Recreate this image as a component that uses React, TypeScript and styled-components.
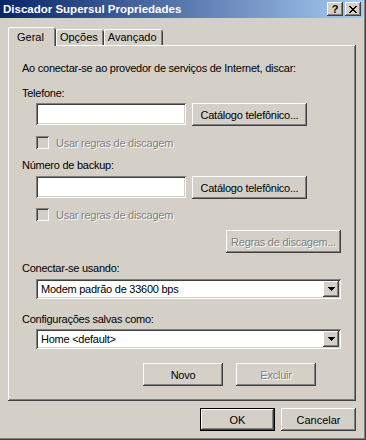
import React from 'react';
import styled, { createGlobalStyle, css } from 'styled-components';

const GlobalStyle = createGlobalStyle`
  html, body {
    margin: 0;
    padding: 0;
    background: #d4d0c8;
  }
  body {
    font-family: 'Liberation Sans', Arial, sans-serif;
    font-size: 11px;
    color: #000;
  }
`;

const raised = css`
  box-shadow: inset -1px -1px #404040, inset 1px 1px #ffffff,
    inset -2px -2px #808080, inset 2px 2px #d4d0c8;
`;

const sunken = css`
  box-shadow: inset 1px 1px #808080, inset -1px -1px #ffffff,
    inset 2px 2px #404040, inset -2px -2px #d4d0c8;
`;

const disabledText = css`
  color: #808080;
  text-shadow: 1px 1px 0 #ffffff;
`;

const Window = styled.div`
  width: 366px;
  height: 440px;
  box-sizing: border-box;
  background: #d4d0c8;
  display: flex;
  flex-direction: column;
  padding: 0 3px 3px 0;
  box-shadow: inset -1px -1px #404040, inset -2px -2px #808080;
`;

const TitleBar = styled.div`
  height: 18px;
  display: flex;
  align-items: center;
  padding: 0 2px 0 3px;
  background: linear-gradient(to right, #0a246a, #a6caf0);
`;

const Title = styled.span`
  flex: 1;
  color: #fff;
  font-weight: bold;
  font-size: 11.5px;
  white-space: nowrap;
`;

const TitleButton = styled.div<{ $gap?: number }>`
  width: 16px;
  height: 14px;
  box-sizing: border-box;
  margin-left: ${(p) => p.$gap ?? 0}px;
  background: #d4d0c8;
  ${raised};
  display: flex;
  align-items: center;
  justify-content: center;
  font-weight: bold;
  font-size: 11px;
  line-height: 1;
`;

const Body = styled.div`
  flex: 1;
  display: flex;
  flex-direction: column;
  padding: 9px 7px 0 8px;
`;

const TabStrip = styled.div`
  display: flex;
  align-items: flex-end;
  height: 18px;
  position: relative;
  z-index: 1;
`;

const Tab = styled.div<{ $active?: boolean }>`
  box-sizing: border-box;
  height: ${(p) => (p.$active ? 19 : 16)}px;
  margin-bottom: ${(p) => (p.$active ? -1 : 0)}px;
  padding: ${(p) => (p.$active ? '0 12px 0 9px' : '0 6px 0 4px')};
  display: flex;
  align-items: center;
  background: #d4d0c8;
  border-radius: 2px 2px 0 0;
  box-shadow: inset 1px 0 #ffffff, inset 0 1px #ffffff, inset -1px 0 #404040,
    inset -2px 0 #808080;
  white-space: nowrap;
`;

const Panel = styled.div`
  box-sizing: border-box;
  width: 348px;
  height: 356px;
  display: flex;
  flex-direction: column;
  padding: 0 15px 0 14px;
  letter-spacing: -0.25px;
  box-shadow: inset -1px -1px #404040, inset 1px 1px #ffffff,
    inset -2px -2px #808080;
`;

const Label = styled.div<{ $top: number; $disabled?: boolean }>`
  margin-top: ${(p) => p.$top}px;
  line-height: 13px;
  height: 13px;
  white-space: nowrap;
  ${(p) => p.$disabled && disabledText};
`;

const FieldRow = styled.div<{ $top: number }>`
  display: flex;
  gap: 6px;
  margin: ${(p) => p.$top}px 0 0 14px;
  align-items: flex-start;
`;

const TextBox = styled.div`
  width: 150px;
  height: 22px;
  box-sizing: border-box;
  background: #fff;
  ${sunken};
`;

const Button = styled.div<{
  $w: number;
  $disabled?: boolean;
  $default?: boolean;
}>`
  width: ${(p) => p.$w}px;
  height: 23px;
  box-sizing: border-box;
  background: #d4d0c8;
  display: flex;
  align-items: center;
  justify-content: center;
  white-space: nowrap;
  ${(p) =>
    p.$default
      ? css`
          box-shadow: inset 0 0 0 1px #000, inset -2px -2px #404040,
            inset 2px 2px #ffffff, inset -3px -3px #808080,
            inset 3px 3px #d4d0c8;
        `
      : raised};
  ${(p) => p.$disabled && disabledText};
`;

const CheckRow = styled.div<{ $top: number }>`
  display: flex;
  align-items: center;
  gap: 7px;
  height: 13px;
  margin: ${(p) => p.$top}px 0 0 14px;
  ${disabledText};
`;

const CheckBox = styled.span`
  width: 13px;
  height: 13px;
  box-sizing: border-box;
  background: #d4d0c8;
  ${sunken};
`;

const RightButton = styled.div<{ $top: number }>`
  display: flex;
  justify-content: flex-end;
  margin-top: ${(p) => p.$top}px;
`;

const Select = styled.div<{ $top: number }>`
  width: 305px;
  height: 20px;
  box-sizing: border-box;
  margin: ${(p) => p.$top}px 0 0 14px;
  background: #fff;
  ${sunken};
  display: flex;
  align-items: center;
  justify-content: space-between;
  padding: 0 2px 0 5px;
`;

const DropButton = styled.div`
  width: 16px;
  height: 16px;
  box-sizing: border-box;
  background: #d4d0c8;
  ${raised};
  display: flex;
  align-items: center;
  justify-content: center;
`;

const ButtonRow = styled.div<{ $top: number; $left: number }>`
  display: flex;
  gap: 13px;
  margin: ${(p) => p.$top}px 0 0 ${(p) => p.$left}px;
`;

const Footer = styled.div`
  display: flex;
  justify-content: flex-end;
  gap: 6px;
  width: 348px;
  margin-top: 7px;
`;

const CloseGlyph = () => (
  <svg width='8' height='7' viewBox='0 0 8 7' shapeRendering='crispEdges'>
    <path
      d='M0 0h2v1H0zM6 0h2v1H6zM1 1h2v1H1zM5 1h2v1H5zM2 2h4v1H2zM3 3h2v1H3zM2 4h4v1H2zM1 5h2v1H1zM5 5h2v1H5zM0 6h2v1H0zM6 6h2v1H6z'
      fill='#000'
    />
  </svg>
);

const Arrow = () => (
  <svg width='7' height='4' viewBox='0 0 7 4' shapeRendering='crispEdges'>
    <path d='M0 0h7v1H0zM1 1h5v1H1zM2 2h3v1H2zM3 3h1v1H3z' fill='#000' />
  </svg>
);

const ComboBox = ({ top, value }: { top: number; value: string }) => (
  <Select $top={top}>
    <span>{value}</span>
    <DropButton>
      <Arrow />
    </DropButton>
  </Select>
);

export default function App() {
  return (
    <>
      <GlobalStyle />
      <Window>
        <TitleBar>
          <Title>Discador Supersul Propriedades</Title>
          <TitleButton>?</TitleButton>
          <TitleButton $gap={2}>
            <CloseGlyph />
          </TitleButton>
        </TitleBar>

        <Body>
          <TabStrip>
            <Tab $active>Geral</Tab>
            <Tab>Opções</Tab>
            <Tab>Avançado</Tab>
          </TabStrip>

          <Panel>
            <Label $top={17}>
              Ao conectar-se ao provedor de serviços de Internet, discar:
            </Label>

            <Label $top={12}>Telefone:</Label>
            <FieldRow $top={3}>
              <TextBox />
              <Button $w={115}>Catálogo telefônico...</Button>
            </FieldRow>
            <CheckRow $top={10}>
              <CheckBox />
              Usar regras de discagem
            </CheckRow>

            <Label $top={10}>Número de backup:</Label>
            <FieldRow $top={4}>
              <TextBox />
              <Button $w={115}>Catálogo telefônico...</Button>
            </FieldRow>
            <CheckRow $top={9}>
              <CheckBox />
              Usar regras de discagem
            </CheckRow>

            <RightButton $top={9}>
              <Button $w={115} $disabled>
                Regras de discagem...
              </Button>
            </RightButton>

            <Label $top={9}>Conectar-se usando:</Label>
            <ComboBox top={4} value='Modem padrão de 33600 bps' />

            <Label $top={14}>Configurações salvas como:</Label>
            <ComboBox top={3} value='Home <default>' />

            <ButtonRow $top={14} $left={121}>
              <Button $w={80}>Novo</Button>
              <Button $w={80} $disabled>
                Excluir
              </Button>
            </ButtonRow>
          </Panel>

          <Footer>
            <Button $w={75} $default>
              OK
            </Button>
            <Button $w={75}>Cancelar</Button>
          </Footer>
        </Body>
      </Window>
    </>
  );
}
